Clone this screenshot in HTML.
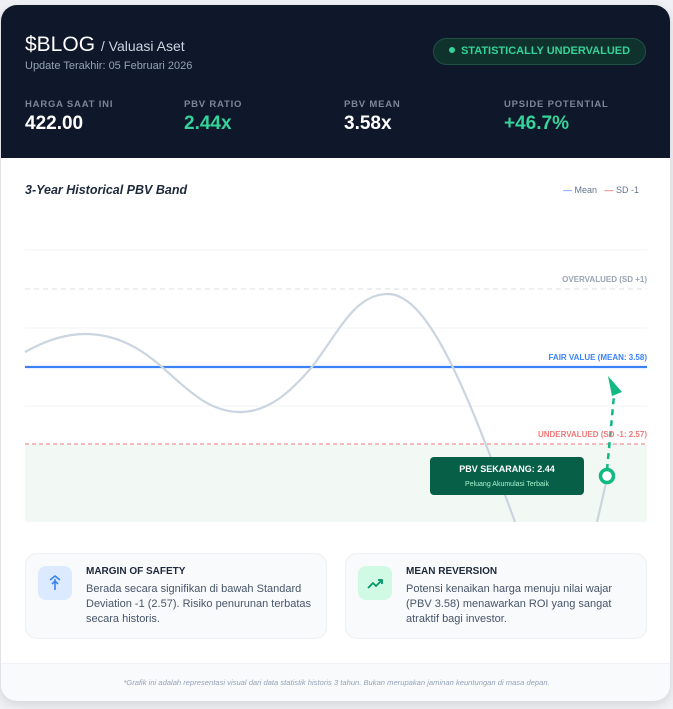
<!DOCTYPE html><html><head><style>
body{margin:0;width:673px;height:709px;background:#eef0f4;font-family:"Liberation Sans",sans-serif;position:relative;overflow:hidden}
.card{position:absolute;left:1px;top:5px;width:669px;height:695px;background:#fff;border-radius:16px;overflow:hidden;box-shadow:0 4px 10px rgba(0,0,0,.12)}
.hd{position:absolute;left:0;top:0;width:669px;height:153px;background:#0f172a}
.t{position:absolute;white-space:nowrap}
.lbl{font-size:9.5px;font-weight:bold;letter-spacing:.8px;color:#7b8699}
.val{font-size:19px;font-weight:bold}
.box{position:absolute;top:553px;width:300px;height:84px;background:#f8fafc;border:1px solid #edf0f4;border-radius:12px}
.ic{position:absolute;left:12px;top:12px;width:34px;height:34px;border-radius:8px}
.bt{position:absolute;left:60px;top:12px;font-size:10px;font-weight:bold;color:#1e293b}
.bp{position:absolute;left:60px;top:28px;font-size:11px;line-height:15px;color:#475569;width:232px}
</style></head><body>
<div class="card">
<div class="hd">
<div class="t" style="left:24px;top:28px;font-size:21px;color:#fff">$BLOG <span style="font-size:14px;color:#cbd5e1">/ Valuasi Aset</span></div>
<div class="t" style="left:24px;top:55px;font-size:11px;color:#94a3b8">Update Terakhir: 05 Februari 2026</div>
<div class="t" style="left:432px;top:33px;width:213px;height:27px;border:1px solid #1f5147;background:#10322d;border-radius:14px;box-sizing:border-box;color:#34d399;font-size:11px;font-weight:bold;line-height:25px;text-align:center"><span style="display:inline-block;width:6px;height:6px;border-radius:3px;background:#34d399;margin-right:6px;vertical-align:1px"></span>STATISTICALLY UNDERVALUED</div>
<div class="t lbl" style="left:24px;top:94px">HARGA SAAT INI</div><div class="t val" style="left:24px;top:108px;color:#fff">422.00</div>
<div class="t lbl" style="left:183px;top:94px">PBV RATIO</div><div class="t val" style="left:183px;top:108px;color:#34d399">2.44x</div>
<div class="t lbl" style="left:343px;top:94px">PBV MEAN</div><div class="t val" style="left:343px;top:108px;color:#fff">3.58x</div>
<div class="t lbl" style="left:503px;top:94px">UPSIDE POTENTIAL</div><div class="t val" style="left:503px;top:108px;color:#34d399">+46.7%</div>
</div>
<div class="t" style="left:24px;top:178px;font-size:12.5px;font-weight:bold;font-style:italic;color:#1e293b">3-Year Historical PBV Band</div>
<div class="t" style="left:562px;top:180px;font-size:9px;color:#64748b"><span style="color:#3b82f6">—</span> Mean &nbsp; <span style="color:#ef4444">—</span> SD -1</div>
</div>
<svg width="673" height="709" style="position:absolute;left:0;top:0">
<rect x="25" y="444" width="622" height="78" fill="#f2f8f4"/>
<line x1="25" x2="647" y1="250" y2="250" stroke="#f1f3f6"/>
<line x1="25" x2="647" y1="328" y2="328" stroke="#f1f3f6"/>
<line x1="25" x2="647" y1="406" y2="406" stroke="#f1f3f6"/>
<line x1="25" x2="647" y1="289" y2="289" stroke="#d8dde5" stroke-dasharray="5 4"/>
<line x1="25" x2="647" y1="444" y2="444" stroke="#f07a7a" stroke-dasharray="4 3"/>
<line x1="25" x2="647" y1="367" y2="367" stroke="#3b82f6" stroke-width="2.2"/>
<path d="M25 352 C50 338 70 334 85 334 C120 334 145 352 162 367 C190 392 210 412 240 412 C270 412 292 390 312 367 C340 330 355 294 388 294 C430 294 470 400 515 522" fill="none" stroke="#cbd5e1" stroke-width="2.2"/>
<path d="M597 522 C601 505 604 492 607 478" fill="none" stroke="#cbd5e1" stroke-width="2.2"/>
<path d="M607 470 L614 395" stroke="#10b981" stroke-width="2.5" stroke-dasharray="6 5" fill="none"/>
<path d="M608 376 L622 392 L612 396 Z" fill="#10b981"/>
<circle cx="607" cy="476" r="6.5" fill="#fff" stroke="#10b981" stroke-width="3.5"/>
<text x="647" y="282" text-anchor="end" font-size="8" font-weight="bold" fill="#9aa4b4" font-family="Liberation Sans">OVERVALUED (SD +1)</text>
<text x="647" y="360" text-anchor="end" font-size="8" font-weight="bold" fill="#3b82f6" font-family="Liberation Sans">FAIR VALUE (MEAN: 3.58)</text>
<text x="647" y="437" text-anchor="end" font-size="8" font-weight="bold" fill="#f07a7a" font-family="Liberation Sans">UNDERVALUED (SD -1: 2.57)</text>
<rect x="430" y="457" width="154" height="38" rx="4" fill="#065f46"/>
<text x="507" y="472" text-anchor="middle" font-size="9" font-weight="bold" fill="#fff" font-family="Liberation Sans">PBV SEKARANG: 2.44</text>
<text x="507" y="486" text-anchor="middle" font-size="7" fill="#a7f3d0" font-family="Liberation Sans">Peluang Akumulasi Terbaik</text>
</svg>
<div class="box" style="left:25px"><div class="ic" style="background:#dbeafe"><svg width="34" height="34"><path d="M12 14 L17 10 L22 14 M17 13 V24 M14 18 L17 15 L20 18" stroke="#3b82f6" stroke-width="1.6" fill="none"/></svg></div>
<div class="bt">MARGIN OF SAFETY</div><div class="bp">Berada secara signifikan di bawah Standard Deviation -1 (2.57). Risiko penurunan terbatas secara historis.</div></div>
<div class="box" style="left:345px"><div class="ic" style="background:#d1fae5"><svg width="34" height="34"><path d="M10 22 L15 17 L18 20 L24 14 M20 14 H24 V18" stroke="#059669" stroke-width="1.8" fill="none"/></svg></div>
<div class="bt">MEAN REVERSION</div><div class="bp">Potensi kenaikan harga menuju nilai wajar (PBV 3.58) menawarkan ROI yang sangat atraktif bagi investor.</div></div>
<div style="position:absolute;left:1px;top:663px;width:669px;height:37px;background:#f8fafc;border-top:1px solid #eef1f5;border-radius:0 0 16px 16px"></div>
<div class="t" style="left:0;width:673px;text-align:center;top:678px;font-size:7.6px;font-style:italic;color:#94a3b8">*Grafik ini adalah representasi visual dari data statistik historis 3 tahun. Bukan merupakan jaminan keuntungan di masa depan.</div>
</body></html>
